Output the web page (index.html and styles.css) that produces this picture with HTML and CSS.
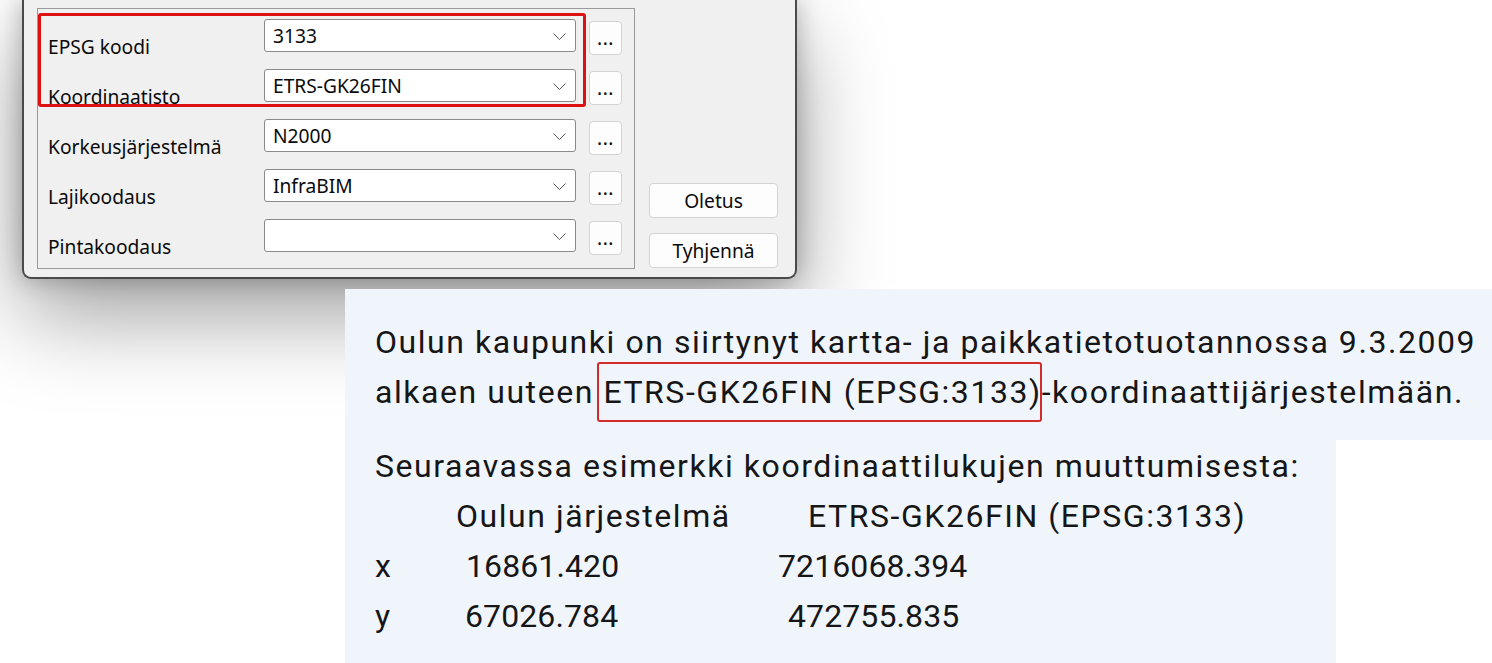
FILE: index.html
```html
<!DOCTYPE html>
<html lang="fi">
<head>
<meta charset="utf-8">
<title>Koordinaatisto</title>
<link rel="stylesheet" href="styles.css">
</head>
<body>
<div class="dialog">
  <div class="group">
    <div class="highlight"></div>
    <div class="rows">
      <div class="label">EPSG koodi</div>
      <div class="combo"><span class="value">3133</span><svg class="chev" width="13" height="7" viewBox="0 0 13 7"><path d="M0.5 0.5 L6.5 6.5 L12.5 0.5" fill="none" stroke="#555" stroke-width="1"/></svg></div>
      <div class="more">...</div>

      <div class="label">Koordinaatisto</div>
      <div class="combo"><span class="value">ETRS-GK26FIN</span><svg class="chev" width="13" height="7" viewBox="0 0 13 7"><path d="M0.5 0.5 L6.5 6.5 L12.5 0.5" fill="none" stroke="#555" stroke-width="1"/></svg></div>
      <div class="more">...</div>

      <div class="label">Korkeusjärjestelmä</div>
      <div class="combo"><span class="value">N2000</span><svg class="chev" width="13" height="7" viewBox="0 0 13 7"><path d="M0.5 0.5 L6.5 6.5 L12.5 0.5" fill="none" stroke="#555" stroke-width="1"/></svg></div>
      <div class="more">...</div>

      <div class="label">Lajikoodaus</div>
      <div class="combo"><span class="value">InfraBIM</span><svg class="chev" width="13" height="7" viewBox="0 0 13 7"><path d="M0.5 0.5 L6.5 6.5 L12.5 0.5" fill="none" stroke="#555" stroke-width="1"/></svg></div>
      <div class="more">...</div>

      <div class="label">Pintakoodaus</div>
      <div class="combo"><span class="value"></span><svg class="chev" width="13" height="7" viewBox="0 0 13 7"><path d="M0.5 0.5 L6.5 6.5 L12.5 0.5" fill="none" stroke="#555" stroke-width="1"/></svg></div>
      <div class="more">...</div>
    </div>
  </div>
  <div class="side">
    <div class="btn">Oletus</div>
    <div class="btn">Tyhjennä</div>
  </div>
</div>

<div class="para1">
  Oulun kaupunki on siirtynyt kartta- ja paikkatietotuotannossa 9.3.2009<br>
  alkaen uuteen <span class="mark">ETRS-GK26FIN (EPSG:3133)</span>-koordinaattijärjestelmään.
</div>
<div class="para2">
  <div class="line">Seuraavassa esimerkki koordinaattilukujen muuttumisesta:</div>
  <div class="table">
    <span></span><span class="h1">Oulun järjestelmä</span><span class="h2">ETRS-GK26FIN (EPSG:3133)</span>
    <span>x</span><span class="num n1">16861.420</span><span class="num">7216068.394</span>
    <span>y</span><span class="num">67026.784</span><span class="num n3">472755.835</span>
  </div>
</div>
</body>
</html>
```

FILE: styles.css
```css
html, body {
  margin: 0;
  padding: 0;
  background: #ffffff;
  overflow: hidden;
}

body {
  width: 1492px;
  height: 663px;
}

.dialog {
  margin-left: 22px;
  width: 741px;
  height: 261px;
  padding: 8px 17px 8px 13px;
  box-sizing: content-box;
  border: 2px solid #4a4a4a;
  border-top: none;
  border-radius: 0 0 9px 9px;
  background: #f0f0f0;
  display: flex;
  align-items: flex-start;
  column-gap: 14px;
  box-shadow: 0 0 24px rgba(0, 0, 0, 0.26), 0 36px 90px rgba(0, 0, 0, 0.38);
  font-family: "Noto Sans", "Open Sans", sans-serif;
  font-size: 19.2px;
  color: #0a0a0a;
}

.group {
  position: relative;
  width: 598px;
  height: 261px;
  border: 1px solid #9a9a9a;
  padding: 10px 0 0 10px;
  box-sizing: border-box;
}

.highlight {
  position: absolute;
  left: 0;
  top: 4px;
  width: 548px;
  height: 94px;
  border: 3px solid #dd1111;
  border-radius: 3px;
  box-sizing: border-box;
}

.rows {
  display: grid;
  grid-template-columns: 203px 312px 33px;
  grid-auto-rows: 33px;
  column-gap: 13px;
  row-gap: 17px;
}

.label {
  align-self: end;
  line-height: 22px;
  margin-bottom: -6px;
  white-space: nowrap;
}

.combo {
  display: flex;
  align-items: center;
  justify-content: space-between;
  background: #ffffff;
  border: 1px solid #8a8a8a;
  border-radius: 3px;
  padding: 0 9px 0 8px;
  box-sizing: border-box;
}

.value {
  line-height: 22px;
}

.chev {
  display: block;
  margin-top: 1px;
}

.more {
  margin-top: 2px;
  height: 34px;
  box-sizing: border-box;
  border: 1px solid #d4d4d4;
  border-radius: 4px;
  background: #fdfdfd;
  display: flex;
  align-items: center;
  justify-content: center;
  line-height: 20px;
  padding-bottom: 1px;
  letter-spacing: 0.5px;
}

.side {
  align-self: stretch;
  width: 129px;
  display: flex;
  flex-direction: column;
  justify-content: flex-end;
  row-gap: 15px;
  padding-bottom: 1px;
}

.btn {
  height: 35px;
  box-sizing: border-box;
  border: 1px solid #d4d4d4;
  border-radius: 4px;
  background: #fdfdfd;
  display: flex;
  align-items: center;
  justify-content: center;
}

.para1, .para2 {
  font-family: Roboto, "Liberation Sans", sans-serif;
  font-size: 32px;
  line-height: 50px;
  color: #161616;
  background: #f0f5fc;
  white-space: nowrap;
  letter-spacing: 1.55px;
}

.para1 {
  margin-top: 10px;
  margin-left: 345px;
  padding: 28px 0 23px 30px;
}

.para2 {
  margin-left: 345px;
  width: 961px;
  padding: 1px 0 22px 30px;
}

.mark {
  position: relative;
}

.mark::after {
  content: "";
  position: absolute;
  left: -6px;
  right: 0;
  top: -11px;
  bottom: -11px;
  border: 2.5px solid #d22b2b;
  border-radius: 3px;
}

.table {
  display: grid;
  grid-template-columns: 90px 313px auto;
}

.num {
  letter-spacing: 0.1px;
}

.h1 {
  margin-left: -9px;
}

.h2 {
  margin-left: 30px;
}

.n1 {
  margin-left: 1px;
}

.n3 {
  margin-left: 10px;
}
```
